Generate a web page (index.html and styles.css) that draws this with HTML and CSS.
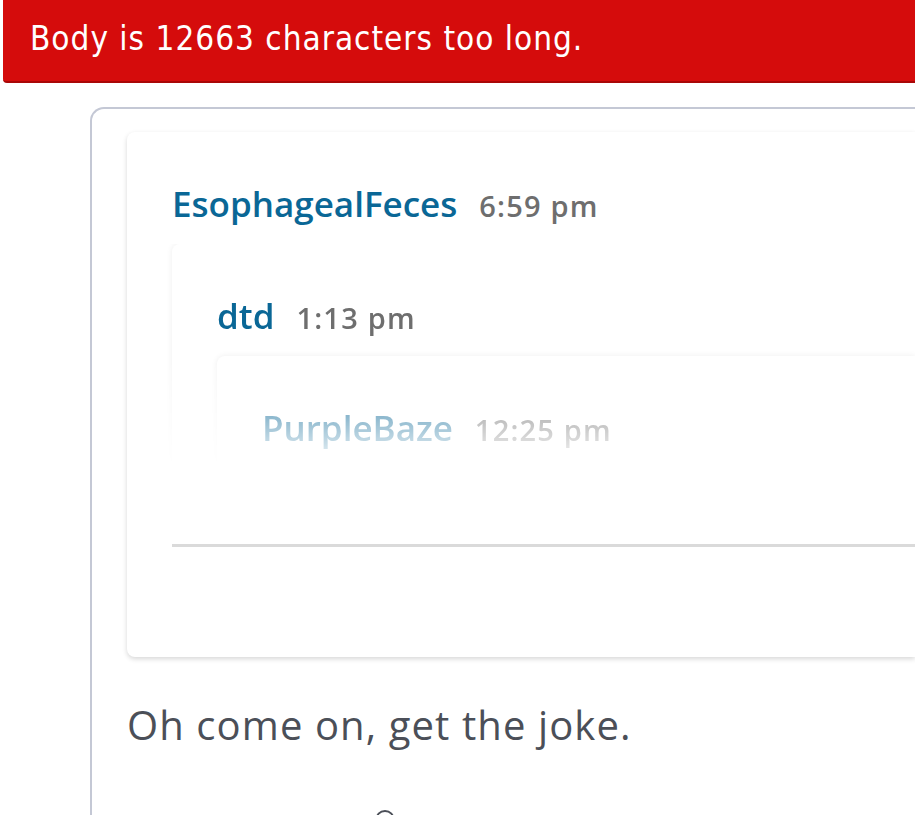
FILE: index.html
```html
<!DOCTYPE html>
<html lang="en">
<head>
    <meta charset="UTF-8">
    <meta name="viewport" content="width=device-width, initial-scale=1.0">
    <title>Reply preview</title>
    <link rel="stylesheet" href="styles.css">
</head>
<body>
    <div class="error-banner">Body is 12663 characters too long.</div>

    <div class="post">
        <div class="quote">
            <div class="quote-head">
                <span class="author">EsophagealFeces</span>
                <span class="time">6:59 pm</span>
            </div>
            <div class="collapsed">
                <div class="quote inner">
                    <div class="quote-head">
                        <span class="author">dtd</span>
                        <span class="time">1:13 pm</span>
                    </div>
                    <div class="quote inner">
                        <div class="quote-head">
                            <span class="author">PurpleBaze</span>
                            <span class="time">12:25 pm</span>
                        </div>
                    </div>
                </div>
            </div>
            <hr class="divider">
        </div>

        <p class="message">Oh come on, get the joke.</p>

        <div class="actions">
            <svg width="22" height="22" viewBox="0 0 22 22"><circle cx="11" cy="11" r="9" fill="none" stroke="#4b4f58" stroke-width="2"/></svg>
        </div>
    </div>
</body>
</html>
```

FILE: styles.css
```css
body {
    margin: 0;
    font-family: "Open Sans", "Noto Sans", sans-serif;
    background: white;
    overflow: hidden;
}
.error-banner {
    margin-left: 3px;
    height: 81px;
    padding-left: 27px;
    background: #d50c0c;
    border-bottom: 2px solid #a90707;
    border-bottom-left-radius: 4px;
    color: white;
    font-family: "DejaVu Sans Condensed", "Liberation Sans", sans-serif;
    font-size: 33px;
    letter-spacing: 1px;
    line-height: 78px;
}
.post {
    margin: 24px 0 0 90px;
    border: 2px solid #c4c8d5;
    border-right: none;
    border-bottom: none;
    border-top-left-radius: 14px;
    padding: 23px 0 0 35px;
    height: 700px;
}
.quote {
    background: white;
    border-radius: 8px 0 0 8px;
    box-shadow: 0 2px 5px rgba(0,0,0,0.16);
    padding: 48px 0 0 45px;
    height: 477px;
}
.quote.inner {
    height: auto;
    padding-top: 48px;
    padding-bottom: 60px;
    box-shadow: 0 0 6px rgba(0,0,0,0.07);
}
.quote-head {
    display: flex;
    align-items: baseline;
    gap: 22px;
    line-height: 48px;
    margin-bottom: 14px;
}
.author {
    color: #0a6796;
    font-size: 35px;
    font-weight: 600;
}
.time {
    color: #6e6e6e;
    font-size: 29px;
    font-weight: 600;
    letter-spacing: 1.2px;
}
.collapsed {
    height: 225px;
    overflow: hidden;
    padding-left: 8px;
    margin-left: -8px;
    -webkit-mask-image: linear-gradient(to bottom, black 50%, transparent 100%);
    mask-image: linear-gradient(to bottom, black 50%, transparent 100%);
}
.divider {
    border: none;
    border-top: 3px solid #dadada;
    margin: 75px 0 0;
}
.message {
    margin: 42px 0 0;
    color: #4b4f58;
    font-size: 40px;
    line-height: 52px;
    letter-spacing: 1.1px;
}
.actions {
    padding: 58px 0 0 247px;
}
```
